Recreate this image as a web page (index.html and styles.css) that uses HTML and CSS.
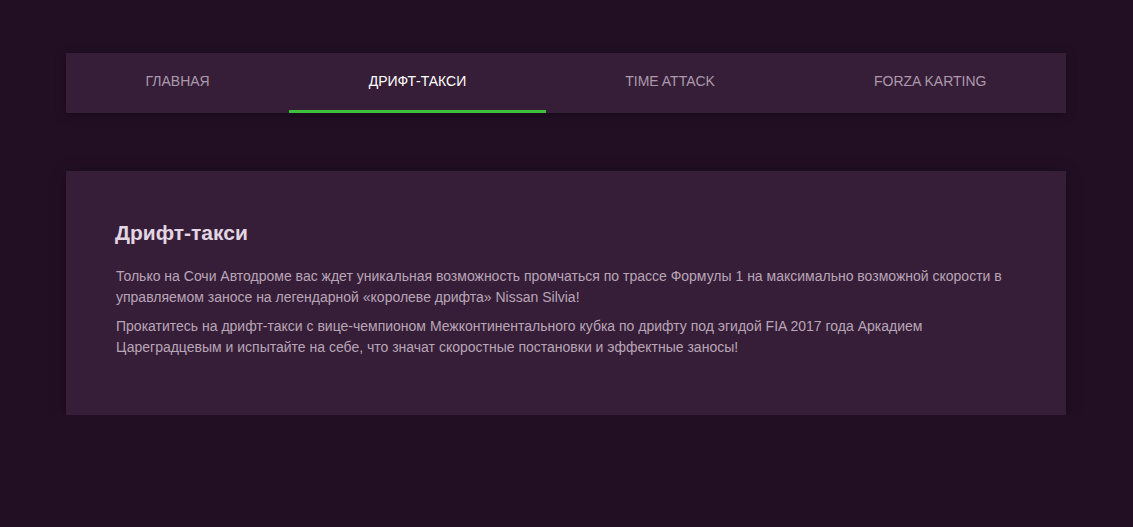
FILE: index.html
```html
<!DOCTYPE html>
<html lang="ru">
<head>
<meta charset="utf-8">
<title>Дрифт-такси</title>
<link rel="stylesheet" href="styles.css">
</head>
<body>
<div class="wrap">
  <nav class="tabs">
    <a class="tab" href="#">Главная</a>
    <a class="tab active" href="#">Дрифт-такси</a>
    <a class="tab" href="#">Time attack</a>
    <a class="tab" href="#">Forza karting</a>
  </nav>
  <section class="card">
    <h2 class="card-title">Дрифт-такси</h2>
    <p class="card-text">Только на Сочи Автодроме вас ждет уникальная возможность промчаться по трассе Формулы 1 на максимально возможной скорости в управляемом заносе на легендарной «королеве дрифта» Nissan Silvia!</p>
    <p class="card-text">Прокатитесь на дрифт-такси с вице-чемпионом Межконтинентального кубка по дрифту под эгидой FIA 2017 года Аркадием Цареградцевым и испытайте на себе, что значат скоростные постановки и эффектные заносы!</p>
  </section>
</div>
</body>
</html>
```
FILE: styles.css
```css
html, body {
  margin: 0;
  padding: 0;
  background: #220f24;
  font-family: "Liberation Sans", Arial, sans-serif;
}
body {
  padding-right: 1px;
}
.wrap {
  width: 1000px;
  margin: 53px auto 0;
}
.tabs {
  display: flex;
  height: 60px;
  background: #371e38;
  box-shadow: 0 2px 10px rgba(0, 0, 0, 0.35);
}
.tab {
  flex: 1 1 auto;
  display: flex;
  align-items: center;
  justify-content: center;
  text-decoration: none;
  text-transform: uppercase;
  font-size: 14px;
  color: #ab9aab;
  border-bottom: 3px solid transparent;
  padding-bottom: 2px;
  box-sizing: border-box;
}
.tab.active {
  color: #ffffff;
  border-bottom-color: #3ec03c;
}
.card {
  margin-top: 58px;
  background: #371e38;
  padding: 49px 50px 50px 49px;
  box-shadow: 0 2px 14px rgba(0, 0, 0, 0.35);
  height: 244px;
  box-sizing: border-box;
}
.card-title {
  margin: 0 0 21px;
  font-size: 21px;
  line-height: 25px;
  font-weight: bold;
  color: #e2d6e2;
}
.card-text {
  margin: 0 0 8px;
  padding-left: 1px;
  font-size: 14px;
  line-height: 21px;
  color: #b7a6b7;
}
```
